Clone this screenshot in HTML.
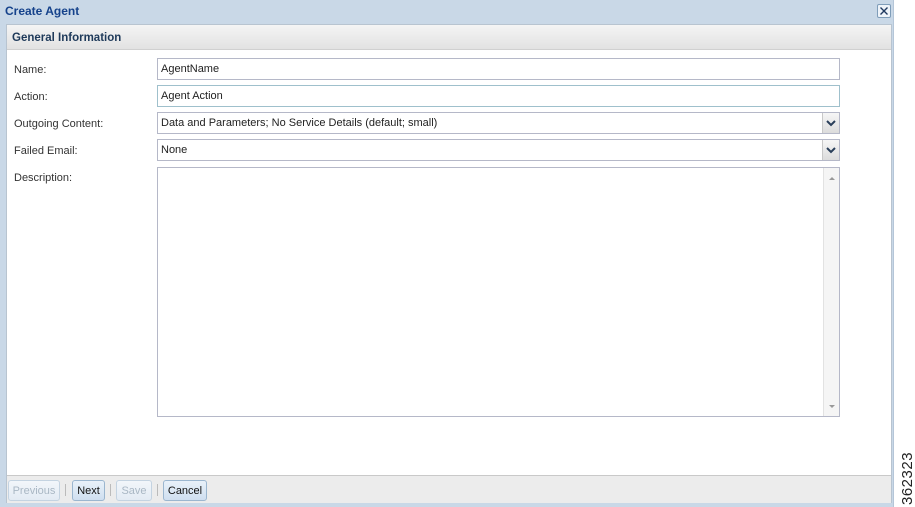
<!DOCTYPE html>
<html><head><style>
*{margin:0;padding:0;box-sizing:border-box}
body{width:915px;height:507px;background:#fff;font-family:"Liberation Sans",Arial,sans-serif;font-size:11px;color:#222;position:relative;overflow:hidden}
.frame{position:absolute;left:0;top:0;width:894px;height:507px;background:#c9d8e7;border-right:1px solid #b5c6d8}
.title{position:absolute;left:5px;top:4px;font-weight:bold;font-size:12px;color:#15428b}
.close{position:absolute;left:877px;top:4px;width:14px;height:14px;border:1px solid #7f9db9;background:#eef3f9;border-radius:2px}
.panel{position:absolute;left:6px;top:24px;width:886px;height:479px;background:#fff;border:1px solid #b8c4d0}
.hdr{position:absolute;left:0;top:0;width:100%;height:25px;background:linear-gradient(#f4f4f4,#e2e2e2);border-bottom:1px solid #d0d0d0;font-weight:bold;font-size:11.5px;color:#1f3a5a;padding:7px 0 0 5px}
.lbl{position:absolute;left:7px;font-size:11px;color:#333}
.f{position:absolute;left:150px;width:683px;height:22px;border:1px solid #b5b8c8;background:#fff;padding:4px 0 0 3px;font-size:11px;color:#222}
.f.act{border-color:#9fc0cc}
.dd{position:absolute;right:0;top:0;width:17px;height:20px;background:linear-gradient(#f6f6f6,#dcdcdc);border-left:1px solid #c8c8c8}
.foot{position:absolute;left:0;top:450px;width:100%;height:28px;background:#ececec;border-top:1px solid #c9c9c9}
.b{position:absolute;top:4px;height:21px;border:1px solid #9bb6cf;border-radius:3px;background:linear-gradient(#e9f1f9,#cfdff0);font-size:11px;color:#111;text-align:center;padding-top:4px}
.b.dis{color:#a9b7c4;border-color:#c4d3e1;background:linear-gradient(#f2f6fa,#e3ebf4)}
.sep{position:absolute;top:8px;width:1px;height:12px;background:#bbb}
</style></head><body>
<div class="frame">
<div class="title">Create Agent</div>
<div class="close"><svg width="12" height="12" viewBox="0 0 12 12"><path d="M2.5 2.5L9.5 9.5M9.5 2.5L2.5 9.5" stroke="#203a60" stroke-width="1.4"/></svg></div>
<div class="panel">
<div class="hdr">General Information</div>
<div class="lbl" style="top:39px">Name:</div>
<div class="lbl" style="top:66px">Action:</div>
<div class="lbl" style="top:93px">Outgoing Content:</div>
<div class="lbl" style="top:120px">Failed Email:</div>
<div class="lbl" style="top:147px">Description:</div>
<div class="f" style="top:33px">AgentName</div>
<div class="f act" style="top:60px">Agent Action</div>
<div class="f" style="top:87px">Data and Parameters; No Service Details (default; small)<div class="dd"><svg width="16" height="20"><path d="M4 8l4 4 4-4" stroke="#2a3f5a" stroke-width="2" fill="none"/></svg></div></div>
<div class="f" style="top:114px">None<div class="dd"><svg width="16" height="20"><path d="M4 8l4 4 4-4" stroke="#2a3f5a" stroke-width="2" fill="none"/></svg></div></div>
<div class="f" style="top:142px;height:250px"><div style="position:absolute;right:0;top:0;width:16px;height:248px;background:#f5f5f5;border-left:1px solid #e2e2e2"><svg width="16" height="248"><path d="M5 12l3-3 3 3z" fill="#999"/><path d="M5 237l3 3 3-3z" fill="#999"/></svg></div></div>
<div class="foot">
<div class="b dis" style="left:1px;width:52px">Previous</div>
<div class="sep" style="left:58px"></div>
<div class="b" style="left:65px;width:33px">Next</div>
<div class="sep" style="left:103px"></div>
<div class="b dis" style="left:109px;width:36px">Save</div>
<div class="sep" style="left:150px"></div>
<div class="b" style="left:156px;width:44px">Cancel</div>
</div>
</div>
</div>
<div style="position:absolute;left:899px;top:505px;transform:rotate(-90deg);transform-origin:0 0;font-size:15px;color:#222;letter-spacing:0.5px">362323</div>
</body></html>
